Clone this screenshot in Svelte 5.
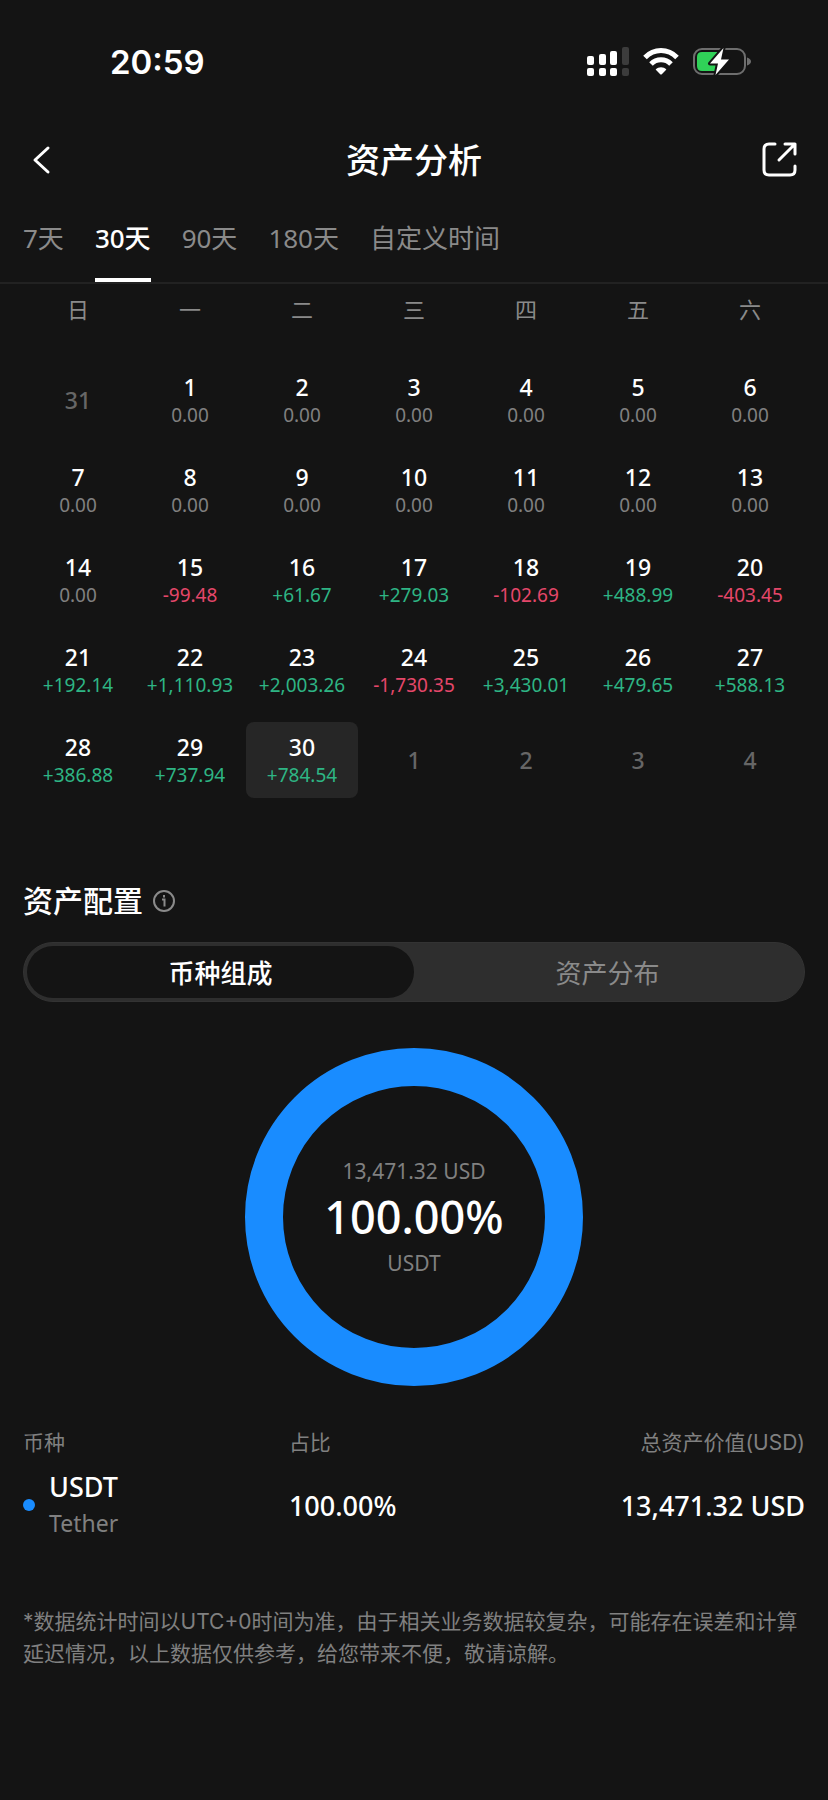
<script lang="ts">
  type Day = { day: number; amount?: string; outside?: boolean };

  const ranges = ['7天', '30天', '90天', '180天', '自定义时间'];
  const weekdays = ['日', '一', '二', '三', '四', '五', '六'];
  const segments = ['币种组成', '资产分布'];

  const amounts = [
    '0.00', '0.00', '0.00', '0.00', '0.00', '0.00',
    '0.00', '0.00', '0.00', '0.00', '0.00', '0.00', '0.00',
    '0.00', '-99.48', '+61.67', '+279.03', '-102.69', '+488.99', '-403.45',
    '+192.14', '+1,110.93', '+2,003.26', '-1,730.35', '+3,430.01', '+479.65', '+588.13',
    '+386.88', '+737.94', '+784.54',
  ];

  const days: Day[] = [
    { day: 31, outside: true },
    ...amounts.map((amount, i) => ({ day: i + 1, amount })),
    ...[1, 2, 3, 4].map((day) => ({ day, outside: true })),
  ];

  const assets = [
    { symbol: 'USDT', name: 'Tether', share: 100, value: '13,471.32 USD', color: '#198cff' },
  ];

  let activeRange = $state('30天');
  let activeSegment = $state('币种组成');
  let selectedDay = $state(30);

  // donut geometry
  const RADIUS = 150;
  const LENGTH = 2 * Math.PI * RADIUS;
</script>

<div class="page">
  <div class="status">
    <span class="clock">20:59</span>
    <div class="status-icons">
      <svg width="42" height="29" viewBox="0 0 42 29" fill="#fff" aria-hidden="true">
        <rect x="0" y="9" width="7" height="9" rx="2" />
        <rect x="12" y="7" width="7" height="11" rx="2" />
        <rect x="23" y="4" width="7" height="14" rx="2" />
        <rect x="0" y="21" width="7" height="8" rx="2" />
        <rect x="12" y="21" width="7" height="8" rx="2" />
        <rect x="23" y="21" width="7" height="8" rx="2" />
        <g fill="#3c3c3c">
          <rect x="35" y="0" width="7" height="18" rx="2" />
          <rect x="35" y="21" width="7" height="8" rx="2" />
        </g>
      </svg>
      <svg width="36" height="27" viewBox="0 0 36 27" fill="none" aria-hidden="true">
        <path d="M2 9.4C11 .2 25 .2 34 9.4" stroke="#fff" stroke-width="5" />
        <path d="M8 16C13.5 10.4 22.5 10.4 28 16" stroke="#fff" stroke-width="5" />
        <path d="M12.6 21.4C15.6 18.4 20.4 18.4 23.4 21.4L18.8 26.2Q18 27 17.2 26.2Z" fill="#fff" />
      </svg>
      <svg width="58" height="30" viewBox="0 0 58 30" aria-hidden="true">
        <rect x="1" y="2" width="51" height="25" rx="8" fill="none" stroke="#6e6e6e" stroke-width="2" />
        <path d="M54 10.5Q58 12 58 14.5T54 18.5Z" fill="#6e6e6e" />
        <path d="M9 5H24V24H9Q4 24 4 19V10Q4 5 9 5Z" fill="#30d158" />
        <path d="M30.5 1L17 16.5H25L22.5 28L36 12.5H28Z" fill="#fff" stroke="#141414" stroke-width="4" paint-order="stroke" stroke-linejoin="round" />
      </svg>
    </div>
  </div>

  <header class="header">
    <button class="icon-btn" aria-label="返回">
      <svg width="38" height="38" viewBox="0 0 38 38" fill="none" stroke="#fff" stroke-width="3" stroke-linecap="round" stroke-linejoin="round">
        <path d="M25 7L12 19L25 31" />
      </svg>
    </button>
    <h1>资产分析</h1>
    <button class="icon-btn" aria-label="分享">
      <svg width="38" height="38" viewBox="0 0 38 38" fill="none" stroke="#fff" stroke-width="3" stroke-linecap="round" stroke-linejoin="round">
        <path d="M14 3H8Q3 3 3 8V29Q3 34 8 34H29Q34 34 34 29V25" />
        <path d="M24 3H34V13M34 3L18 19" />
      </svg>
    </button>
  </header>

  <nav class="tabs">
    {#each ranges as range}
      <button class="tab" class:active={activeRange === range} onclick={() => (activeRange = range)}>
        {range}
      </button>
    {/each}
  </nav>

  <main>
    <section class="calendar">
      <div class="weekdays">
        {#each weekdays as weekday}
          <span>{weekday}</span>
        {/each}
      </div>
      <div class="days">
        {#each days as d}
          <button
            class="day"
            class:outside={d.outside}
            class:selected={!d.outside && d.day === selectedDay}
            disabled={d.outside}
            onclick={() => (selectedDay = d.day)}
          >
            <span class="date">{d.day}</span>
            {#if d.amount}
              <span class="amount" class:up={d.amount.startsWith('+')} class:down={d.amount.startsWith('-')}>
                {d.amount}
              </span>
            {/if}
          </button>
        {/each}
      </div>
    </section>

    <section class="allocation">
      <div class="section-title">
        <h2>资产配置</h2>
        <button class="info" aria-label="说明">
          <svg width="22" height="22" viewBox="0 0 22 22" fill="none" stroke="#8a8a8a" stroke-width="2">
            <circle cx="11" cy="11" r="10" />
            <path d="M9 9.5H11.5V16.5M11 5V7.5" />
          </svg>
        </button>
      </div>

      <div class="segmented">
        {#each segments as segment}
          <button class:active={activeSegment === segment} onclick={() => (activeSegment = segment)}>
            {segment}
          </button>
        {/each}
      </div>

      <div class="donut">
        <svg viewBox="0 0 338 338" aria-hidden="true">
          {#each assets as asset}
            <circle
              cx="169"
              cy="169"
              r={RADIUS}
              fill="none"
              stroke={asset.color}
              stroke-width="38"
              stroke-dasharray="{(LENGTH * asset.share) / 100} {LENGTH}"
            />
          {/each}
        </svg>
        <div class="donut-label">
          <span>{assets[0].value}</span>
          <strong>{assets[0].share.toFixed(2)}%</strong>
          <span>{assets[0].symbol}</span>
        </div>
      </div>

      <table>
        <thead>
          <tr>
            <th>币种</th>
            <th>占比</th>
            <th class="value">总资产价值(USD)</th>
          </tr>
        </thead>
        <tbody>
          {#each assets as asset}
            <tr>
              <td>
                <div class="coin">
                  <i class="dot" style="background: {asset.color}"></i>
                  <div class="coin-name">
                    <span>{asset.symbol}</span>
                    <small>{asset.name}</small>
                  </div>
                </div>
              </td>
              <td>{asset.share.toFixed(2)}%</td>
              <td class="value">{asset.value}</td>
            </tr>
          {/each}
        </tbody>
      </table>
    </section>

    <p class="note">
      *数据统计时间以UTC+0时间为准，由于相关业务数据较复杂，可能存在误差和计算延迟情况，以上数据仅供参考，给您带来不便，敬请谅解。
    </p>
  </main>
</div>

<style>
  :global(body) {
    background: #141414;
  }

  .page {
    min-height: 100vh;
    box-sizing: border-box;
    background: #141414;
    color: #fff;
    font-family: 'Noto Sans', 'Noto Sans CJK SC', sans-serif;
  }

  button {
    padding: 0;
    border: 0;
    background: none;
    color: inherit;
    font: inherit;
    cursor: pointer;
  }

  svg {
    display: block;
  }

  h1,
  h2,
  p {
    margin: 0;
  }

  .status {
    display: flex;
    align-items: center;
    justify-content: space-between;
    height: 123px;
    padding: 0 77px 0 110px;
  }

  .clock {
    font-family: Inter, sans-serif;
    font-size: 33px;
    font-weight: 600;
  }

  .status-icons {
    display: flex;
    align-items: center;
    gap: 14px;
  }

  .header {
    display: grid;
    grid-template-columns: 1fr auto 1fr;
    align-items: center;
    height: 73px;
    padding: 0 23px;
  }

  .icon-btn {
    justify-self: start;
  }

  .icon-btn:last-child {
    justify-self: end;
    padding-right: 6px;
  }

  h1 {
    font-size: 34px;
    font-weight: 500;
    line-height: 48px;
  }

  .tabs {
    display: flex;
    gap: 31px;
    height: 86px;
    padding: 0 23px;
    border-bottom: 2px solid #222;
  }

  .tab {
    border-bottom: 4px solid transparent;
    color: #8a8a8a;
    font-size: 26px;
  }

  .tab.active {
    border-bottom-color: #fff;
    color: #fff;
    font-weight: 500;
  }

  .weekdays,
  .days {
    display: grid;
    grid-template-columns: repeat(7, 1fr);
    padding: 0 22px;
  }

  .weekdays {
    padding-top: 9px;
    padding-bottom: 37px;
    color: #8a8a8a;
    font-size: 22px;
    line-height: 32px;
    text-align: center;
  }

  .days {
    row-gap: 14px;
  }

  .day {
    display: flex;
    flex-direction: column;
    align-items: center;
    justify-content: center;
    height: 76px;
    border-radius: 8px;
  }

  .day.selected {
    background: #262626;
  }

  .date {
    font-size: 23px;
    font-weight: 500;
    line-height: 30px;
  }

  .day.outside {
    color: #666;
    cursor: default;
  }

  .amount {
    color: #808080;
    font-size: 19px;
    line-height: 26px;
  }

  .amount.up {
    color: #2eb584;
  }

  .amount.down {
    color: #e5476a;
  }

  .allocation {
    padding: 81px 23px 0;
  }

  .section-title {
    display: flex;
    align-items: center;
    gap: 10px;
  }

  h2 {
    font-size: 30px;
    font-weight: 500;
    line-height: 44px;
  }

  .segmented {
    display: flex;
    height: 52px;
    margin-top: 19px;
    padding: 3px;
    border-radius: 31px;
    border: 1px solid #333;
    background: #2e2e2e;
  }

  .segmented button {
    flex: 1;
    border-radius: 27px;
    color: #8a8a8a;
    font-size: 26px;
  }

  .segmented button.active {
    background: #141414;
    color: #fff;
    font-weight: 500;
  }

  .donut {
    display: grid;
    width: 338px;
    margin: 46px auto 0;
  }

  .donut svg,
  .donut-label {
    grid-area: 1 / 1;
  }

  .donut-label {
    display: flex;
    flex-direction: column;
    align-items: center;
    justify-content: center;
    color: #808080;
    font-size: 21px;
    line-height: 30px;
  }

  .donut-label strong {
    color: #fff;
    font-size: 45px;
    font-weight: 500;
    line-height: 62px;
  }

  table {
    width: 100%;
    margin-top: 42px;
    border-collapse: collapse;
    table-layout: fixed;
  }

  th,
  td {
    padding: 0;
    text-align: left;
  }

  th {
    color: #808080;
    font-family: Inter, 'Noto Sans CJK SC', sans-serif;
    font-size: 21px;
    font-weight: 400;
    line-height: 30px;
  }

  th:first-child {
    width: 34%;
  }

  th:nth-child(2) {
    width: 26%;
  }

  td {
    padding-top: 11px;
    font-size: 27px;
    font-weight: 500;
  }

  .value {
    text-align: right;
  }

  .coin {
    display: flex;
    align-items: center;
    gap: 14px;
  }

  .dot {
    width: 12px;
    height: 12px;
    border-radius: 50%;
  }

  .coin-name {
    display: flex;
    flex-direction: column;
    line-height: 36px;
  }

  .coin-name small {
    color: #808080;
    font-size: 23px;
    font-weight: 400;
  }

  .note {
    padding: 65px 23px;
    color: #808080;
    font-family: Inter, 'Noto Sans CJK SC', sans-serif;
    font-size: 21px;
    line-height: 32px;
  }
</style>
